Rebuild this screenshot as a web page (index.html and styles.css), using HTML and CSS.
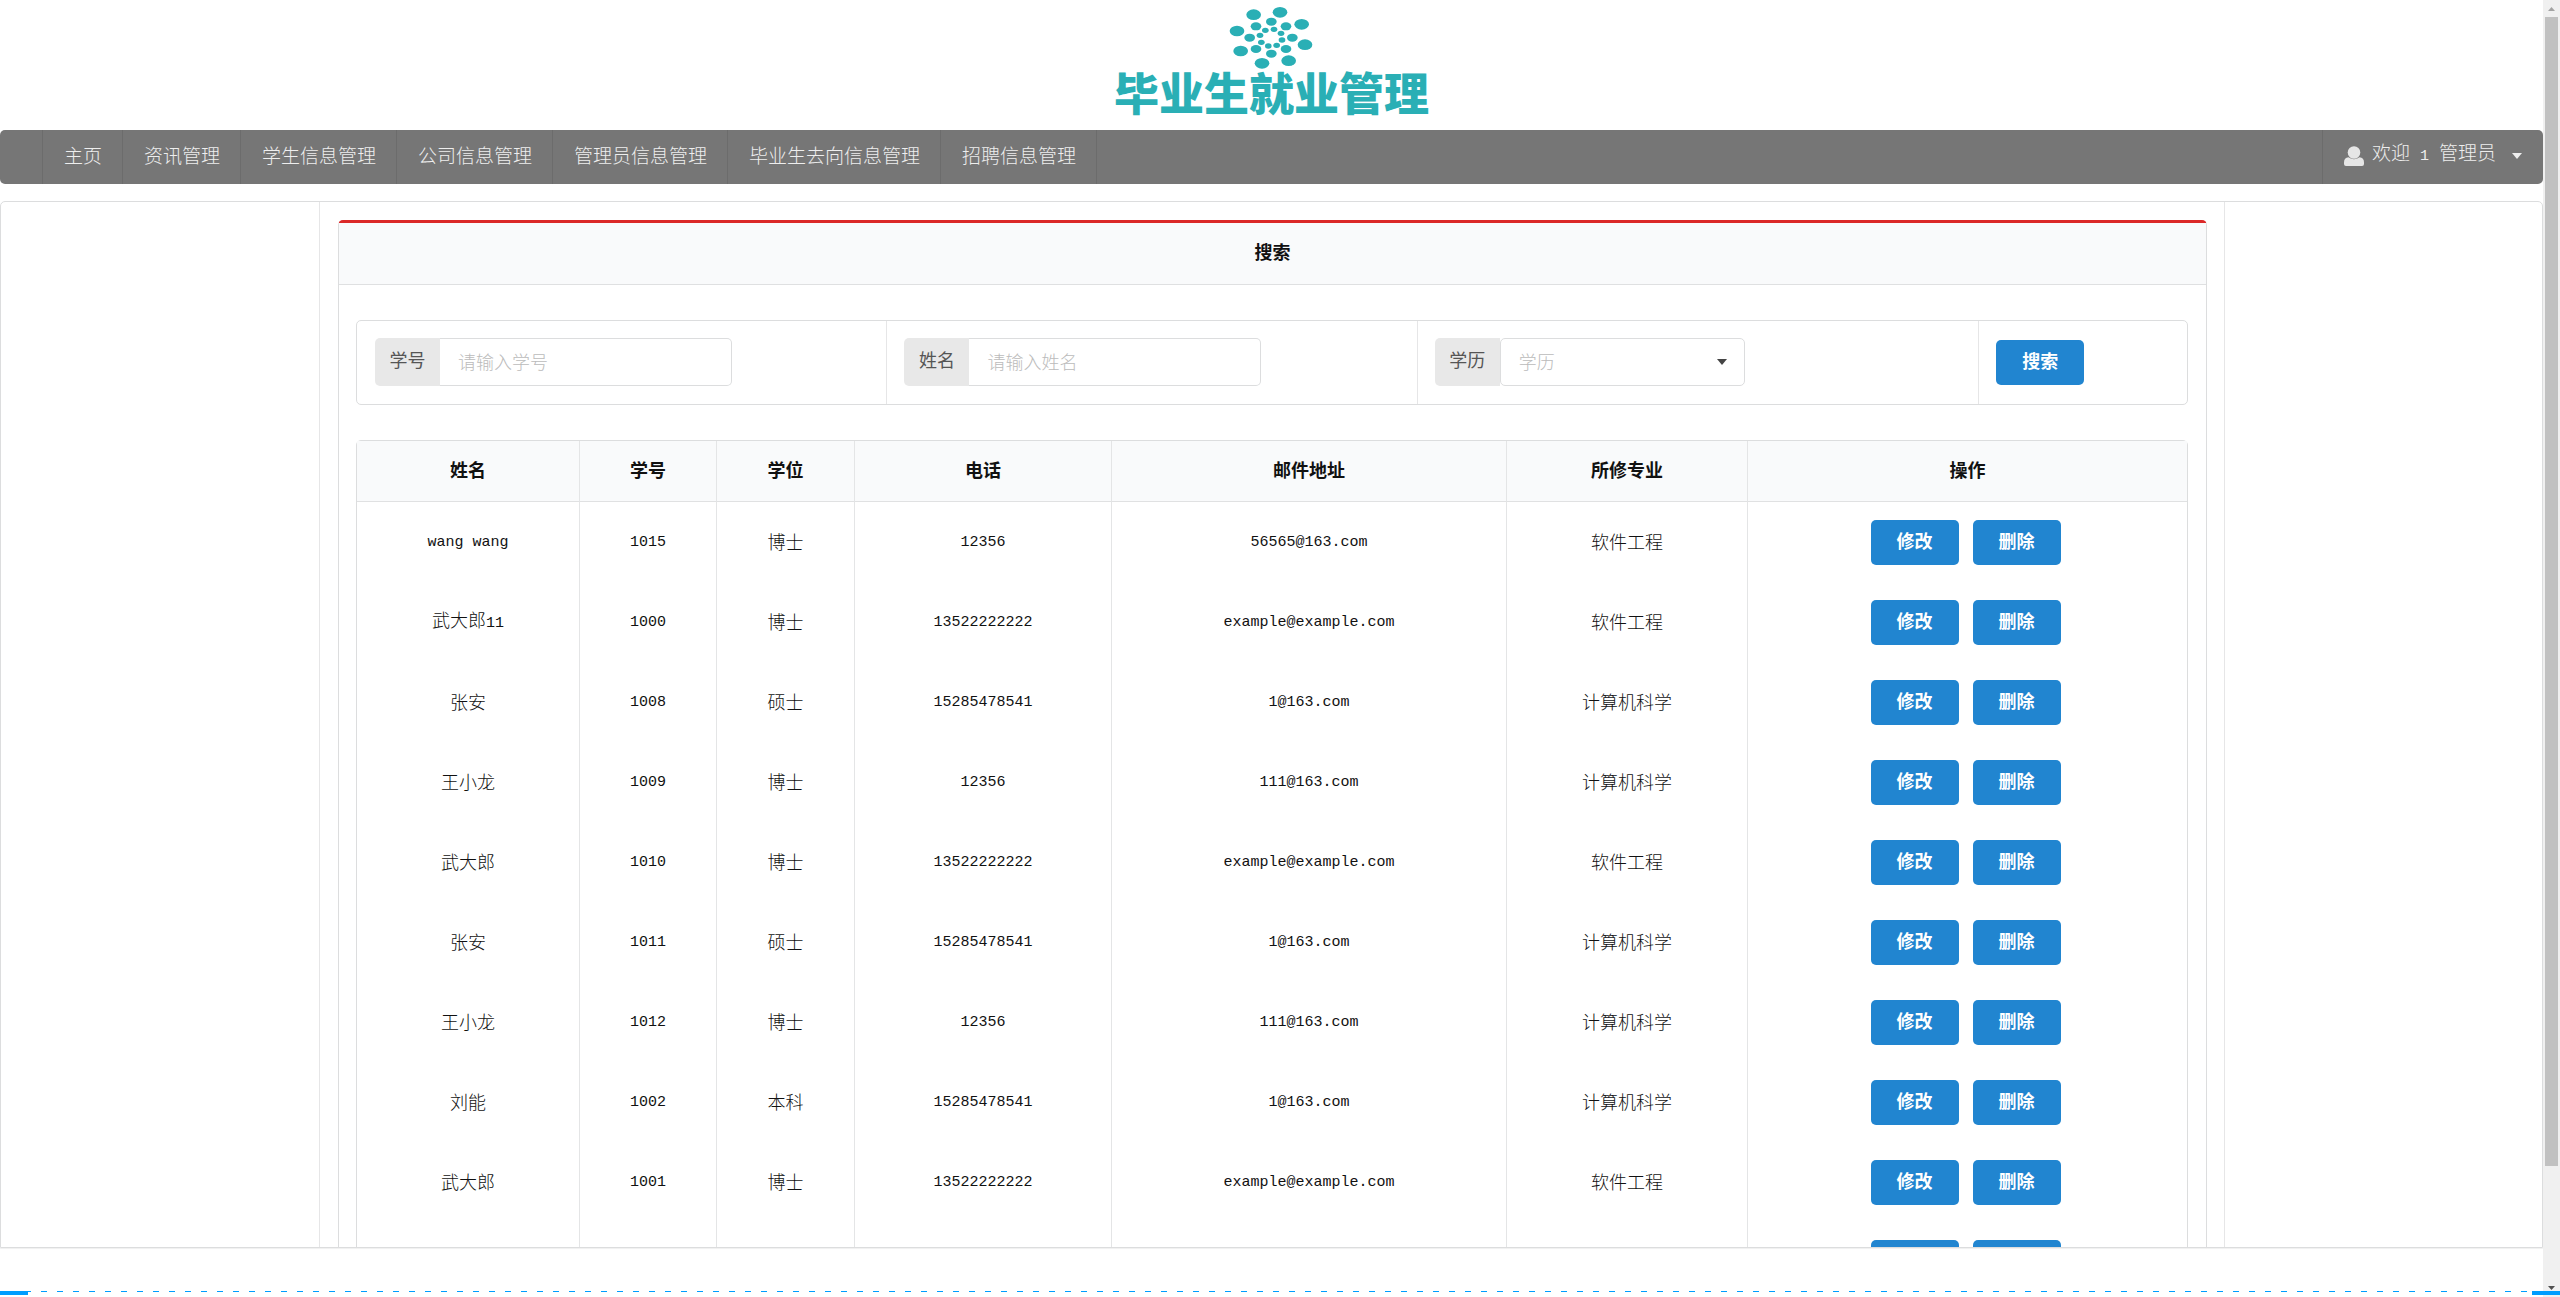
FILE: index.html
```html
<!DOCTYPE html>
<html lang="zh-CN">
<head>
<meta charset="utf-8">
<title>毕业生就业管理</title>
<link rel="stylesheet" href="styles.css">
</head>
<body>
<div class="window">
  <div class="page">
    <header class="brand">
      <svg class="brand-mark" viewBox="440 15 261 195" aria-hidden="true">
        <g>
          <ellipse cx="517" cy="44" rx="22" ry="16"/><ellipse cx="596" cy="37" rx="22" ry="16"/><ellipse cx="661" cy="73" rx="22" ry="16"/><ellipse cx="671" cy="134" rx="22" ry="16"/><ellipse cx="622" cy="182" rx="22" ry="16"/><ellipse cx="542" cy="190" rx="22" ry="16"/><ellipse cx="478" cy="153" rx="22" ry="16"/><ellipse cx="467" cy="93" rx="22" ry="16"/>
          <ellipse cx="570" cy="65" rx="16" ry="12"/><ellipse cx="614" cy="79" rx="16" ry="12"/><ellipse cx="633" cy="113" rx="16" ry="12"/><ellipse cx="614" cy="147" rx="16" ry="12"/><ellipse cx="570" cy="161" rx="16" ry="12"/><ellipse cx="524" cy="147" rx="16" ry="12"/><ellipse cx="505" cy="113" rx="16" ry="12"/><ellipse cx="524" cy="79" rx="16" ry="12"/>
          <ellipse cx="578" cy="88" rx="10" ry="8"/><ellipse cx="599" cy="100" rx="10" ry="8"/><ellipse cx="602" cy="120" rx="10" ry="8"/><ellipse cx="586" cy="136" rx="10" ry="8"/><ellipse cx="561" cy="138" rx="10" ry="8"/><ellipse cx="540" cy="127" rx="10" ry="8"/><ellipse cx="536" cy="106" rx="10" ry="8"/><ellipse cx="552" cy="91" rx="10" ry="8"/>
        </g>
      </svg>
      <span class="brand-name">毕业生就业管理</span>
    </header>

    <nav class="menu">
      <a class="menu-item" href="#">主页</a>
      <a class="menu-item" href="#">资讯管理</a>
      <a class="menu-item" href="#">学生信息管理</a>
      <a class="menu-item" href="#">公司信息管理</a>
      <a class="menu-item" href="#">管理员信息管理</a>
      <a class="menu-item" href="#">毕业生去向信息管理</a>
      <a class="menu-item" href="#">招聘信息管理</a>
      <button class="menu-user" type="button">
        <svg class="user-icon" viewBox="0 0 20 20" aria-hidden="true"><circle cx="10" cy="6.5" r="6.3"/><path d="M0 16.5Q0 11.5 4.5 11.2Q10 15.2 15.500 11.200Q20 11.500 20 16.500V18Q20 20 18 20H2Q0 20 0 18Z"/></svg>
        <span class="user-name"><span>欢迎</span><span class="latin">1</span><span>管理员</span></span>
        <svg class="caret" viewBox="0 0 10 6" aria-hidden="true"><path d="M0 0H10L5 6Z"/></svg>
      </button>
    </nav>

    <main class="frame">
      <div class="side"></div>
      <div class="center">
        <section class="panel">
          <h1 class="panel-title">搜索</h1>
          <div class="panel-body">
            <form class="search">
              <div class="search-cell">
                <label class="tag" for="sno">学号</label>
                <input class="field joined" id="sno" type="text" placeholder="请输入学号">
              </div>
              <div class="search-cell">
                <label class="tag" for="sname">姓名</label>
                <input class="field joined" id="sname" type="text" placeholder="请输入姓名">
              </div>
              <div class="search-cell">
                <label class="tag" for="degree">学历</label>
                <div class="select-wrap">
                  <select class="field select" id="degree"><option>学历</option><option>本科</option><option>硕士</option><option>博士</option></select>
                  <svg class="caret select-caret" viewBox="0 0 10 6" aria-hidden="true"><path d="M0 0H10L5 6Z"/></svg>
                </div>
              </div>
              <div class="search-cell"><button class="btn" type="button">搜索</button></div>
            </form>

            <table class="data">
              <colgroup><col class="c-name"><col class="c-no"><col class="c-degree"><col class="c-phone"><col class="c-mail"><col class="c-major"><col class="c-action"></colgroup>
              <thead><tr><th>姓名</th><th>学号</th><th>学位</th><th>电话</th><th>邮件地址</th><th>所修专业</th><th>操作</th></tr></thead>
              <tbody>
                <tr><td class="latin">wang wang</td><td class="latin">1015</td><td>博士</td><td class="latin">12356</td><td class="latin">56565@163.com</td><td>软件工程</td><td><div class="actions"><button class="btn" type="button">修改</button><button class="btn" type="button">删除</button></div></td></tr>
                <tr><td>武大郎<span class="latin">11</span></td><td class="latin">1000</td><td>博士</td><td class="latin">13522222222</td><td class="latin">example@example.com</td><td>软件工程</td><td><div class="actions"><button class="btn" type="button">修改</button><button class="btn" type="button">删除</button></div></td></tr>
                <tr><td>张安</td><td class="latin">1008</td><td>硕士</td><td class="latin">15285478541</td><td class="latin">1@163.com</td><td>计算机科学</td><td><div class="actions"><button class="btn" type="button">修改</button><button class="btn" type="button">删除</button></div></td></tr>
                <tr><td>王小龙</td><td class="latin">1009</td><td>博士</td><td class="latin">12356</td><td class="latin">111@163.com</td><td>计算机科学</td><td><div class="actions"><button class="btn" type="button">修改</button><button class="btn" type="button">删除</button></div></td></tr>
                <tr><td>武大郎</td><td class="latin">1010</td><td>博士</td><td class="latin">13522222222</td><td class="latin">example@example.com</td><td>软件工程</td><td><div class="actions"><button class="btn" type="button">修改</button><button class="btn" type="button">删除</button></div></td></tr>
                <tr><td>张安</td><td class="latin">1011</td><td>硕士</td><td class="latin">15285478541</td><td class="latin">1@163.com</td><td>计算机科学</td><td><div class="actions"><button class="btn" type="button">修改</button><button class="btn" type="button">删除</button></div></td></tr>
                <tr><td>王小龙</td><td class="latin">1012</td><td>博士</td><td class="latin">12356</td><td class="latin">111@163.com</td><td>计算机科学</td><td><div class="actions"><button class="btn" type="button">修改</button><button class="btn" type="button">删除</button></div></td></tr>
                <tr><td>刘能</td><td class="latin">1002</td><td>本科</td><td class="latin">15285478541</td><td class="latin">1@163.com</td><td>计算机科学</td><td><div class="actions"><button class="btn" type="button">修改</button><button class="btn" type="button">删除</button></div></td></tr>
                <tr><td>武大郎</td><td class="latin">1001</td><td>博士</td><td class="latin">13522222222</td><td class="latin">example@example.com</td><td>软件工程</td><td><div class="actions"><button class="btn" type="button">修改</button><button class="btn" type="button">删除</button></div></td></tr>
                <tr><td></td><td></td><td></td><td></td><td></td><td></td><td><div class="actions"><button class="btn" type="button" aria-label="修改"></button><button class="btn" type="button" aria-label="删除"></button></div></td></tr>
              </tbody>
            </table>
          </div>
        </section>
      </div>
      <div class="side side-right"></div>
    </main>
  </div>

  <div class="scrollbar" aria-hidden="true">
    <svg class="arrow" viewBox="0 0 7 4"><path class="arrow-off" d="M0 4H7L3.500 0Z"/></svg>
    <div class="track"><div class="thumb"></div></div>
    <svg class="arrow" viewBox="0 0 7 4"><path d="M0 0H7L3.500 4Z"/></svg>
  </div>
  <div class="marker" aria-hidden="true"><span></span><span></span></div>
</div>
</body>
</html>
```
FILE: styles.css
```css
* { box-sizing: border-box; }

body {
  margin: 0;
  background: #fff;
  color: #111;
  font: 18px/24px "Noto Sans CJK SC", sans-serif;
  font-weight: 300;
}

button, input, select { font: inherit; }

.latin { font-family: "Liberation Mono", monospace; font-size: 15px; }

.window {
  position: relative;
  display: flex;
  height: 100vh;
  overflow: hidden;
}

.page {
  flex: 1;
  min-width: 0;
  display: flex;
  flex-direction: column;
  padding-bottom: 49px;
}

/* Brand */
.brand {
  flex: none;
  height: 130px;
  padding-top: 5px;
  display: flex;
  flex-direction: column;
  align-items: center;
}
.brand-mark { width: 87px; height: 65px; fill: #2aafb5; }
.brand-name {
  color: #2aafb5;
  font-size: 45px;
  font-weight: 900;
  line-height: 44px;
}

/* Menu bar */
.menu {
  flex: none;
  display: flex;
  height: 54px;
  padding-left: 42px;
  border-radius: 5px;
  background: #767676;
  font-size: 19px;
}
.menu-item {
  display: flex;
  align-items: center;
  padding: 0 20px 5px 21px;
  border-left: 1px solid #6c6c6c;
  color: #eee;
  text-decoration: none;
}
.menu-item:nth-child(7) { border-right: 1px solid #6c6c6c; }
.menu-user {
  margin-left: auto;
  display: flex;
  align-items: center;
  gap: 8px;
  padding: 0 21px 2px;
  border: 0;
  border-left: 1px solid #6c6c6c;
  background: none;
  color: #eee;
}
.user-icon { width: 20px; height: 20px; fill: #e6e6e6; }
.user-name {
  display: flex;
  gap: 10px;
  align-items: baseline;
  margin-right: 8px;
  padding-bottom: 3px;
}
.caret { width: 10px; height: 6px; fill: currentColor; }

/* Framed content */
.frame {
  flex: 1;
  min-height: 0;
  display: grid;
  grid-template-columns: 319fr minmax(0, 1904fr) 318fr;
  margin-top: 17px;
  border: 1px solid #dcddde;
  border-radius: 5px 5px 0 0;
  box-shadow: 0 1px 1px #f0f0f0;
  overflow: hidden;
}
.side { border-right: 1px solid #e6e6e7; }
.side-right { border-right: 0; border-left: 1px solid #e6e6e7; }
.center { padding: 18px 17px 0 18px; min-height: 0; }

.panel {
  border: 1px solid #dcddde;
  border-top: 3px solid #db2828;
  border-radius: 5px;
}
.panel-title {
  margin: 0;
  height: 62px;
  border-bottom: 1px solid #dfe0e1;
  background: #f9fafb;
  font-size: 18px;
  font-weight: 700;
  line-height: 57px;
  text-align: center;
}
.panel-body {
  display: flex;
  flex-direction: column;
  gap: 35px;
  padding: 35px 18px 18px 17px;
}

/* Search form */
.search {
  display: grid;
  grid-template-columns: 530fr 531fr 562fr 209fr;
  border: 1px solid #dcddde;
  border-radius: 5px;
}
.search-cell {
  display: flex;
  align-items: center;
  padding: 17px 17px 18px 18px;
}
.search-cell + .search-cell { border-left: 1px solid #e6e6e7; padding-left: 17px; }
.tag {
  width: 65px;
  height: 48px;
  border-radius: 5px 0 0 5px;
  background: #e8e8e8;
  color: #555;
  font-weight: 400;
  line-height: 43px;
  text-align: center;
}
.field {
  width: 292px;
  height: 48px;
  padding: 0 18px 2px;
  border: 1px solid #dcddde;
  border-radius: 5px;
  background: #fff;
  color: #222;
}
.field::placeholder { color: #bbb; }
.joined { border-left: 0; border-radius: 0 5px 5px 0; }
.select-wrap { position: relative; color: #444; }
.select { width: 245px; appearance: none; color: #bbb; }
.select-caret { position: absolute; right: 18px; top: 21px; pointer-events: none; }

.btn {
  width: 88px;
  height: 45px;
  padding: 0 0 4px;
  border: 0;
  border-radius: 5px;
  background: #2185d0;
  color: #fff;
  font-weight: 700;
}

/* Data table */
.data {
  width: 100%;
  table-layout: fixed;
  border: 1px solid #dcddde;
  border-radius: 5px;
  border-spacing: 0;
}
.c-name { width: 222px; }
.c-no { width: 137px; }
.c-degree { width: 138px; }
.c-phone { width: 257px; }
.c-mail { width: 395px; }
.c-major { width: 241px; }
.data th {
  height: 61px;
  padding: 0 0 5px;
  border-bottom: 1px solid #e0e1e2;
  background: #f9fafb;
  font-weight: 700;
}
.data td {
  height: 80px;
  padding: 0 0 2px;
  text-align: center;
}
.data td.latin { padding: 2px 0 0; }
.data td:last-child { padding: 0; }
.data th + th, .data td + td { border-left: 1px solid #e4e5e6; }
.actions {
  display: flex;
  justify-content: center;
  gap: 14px;
  padding-right: 4px;
}

/* Scrollbar */
.scrollbar {
  flex: none;
  width: 17px;
  display: flex;
  flex-direction: column;
  align-items: center;
  justify-content: space-between;
  padding: 7px 0;
  background: #f0f0f0;
}
.arrow { width: 7px; height: 4px; fill: #505050; }
.arrow-off { fill: #a3a3a3; }
.track { width: 13px; flex: 1; padding: 6px 0; }
.thumb { height: 91%; background: #c1c1c1; }

/* Bottom marker line */
.marker {
  position: absolute;
  left: 0;
  right: 0;
  bottom: 2px;
  height: 4px;
  display: flex;
  justify-content: space-between;
  background: repeating-linear-gradient(to right, transparent 0 9px, #009dff 9px 15px, transparent 15px 16px) top / 100% 1px no-repeat;
}
.marker span { width: 28px; background: #009dff; }
```
